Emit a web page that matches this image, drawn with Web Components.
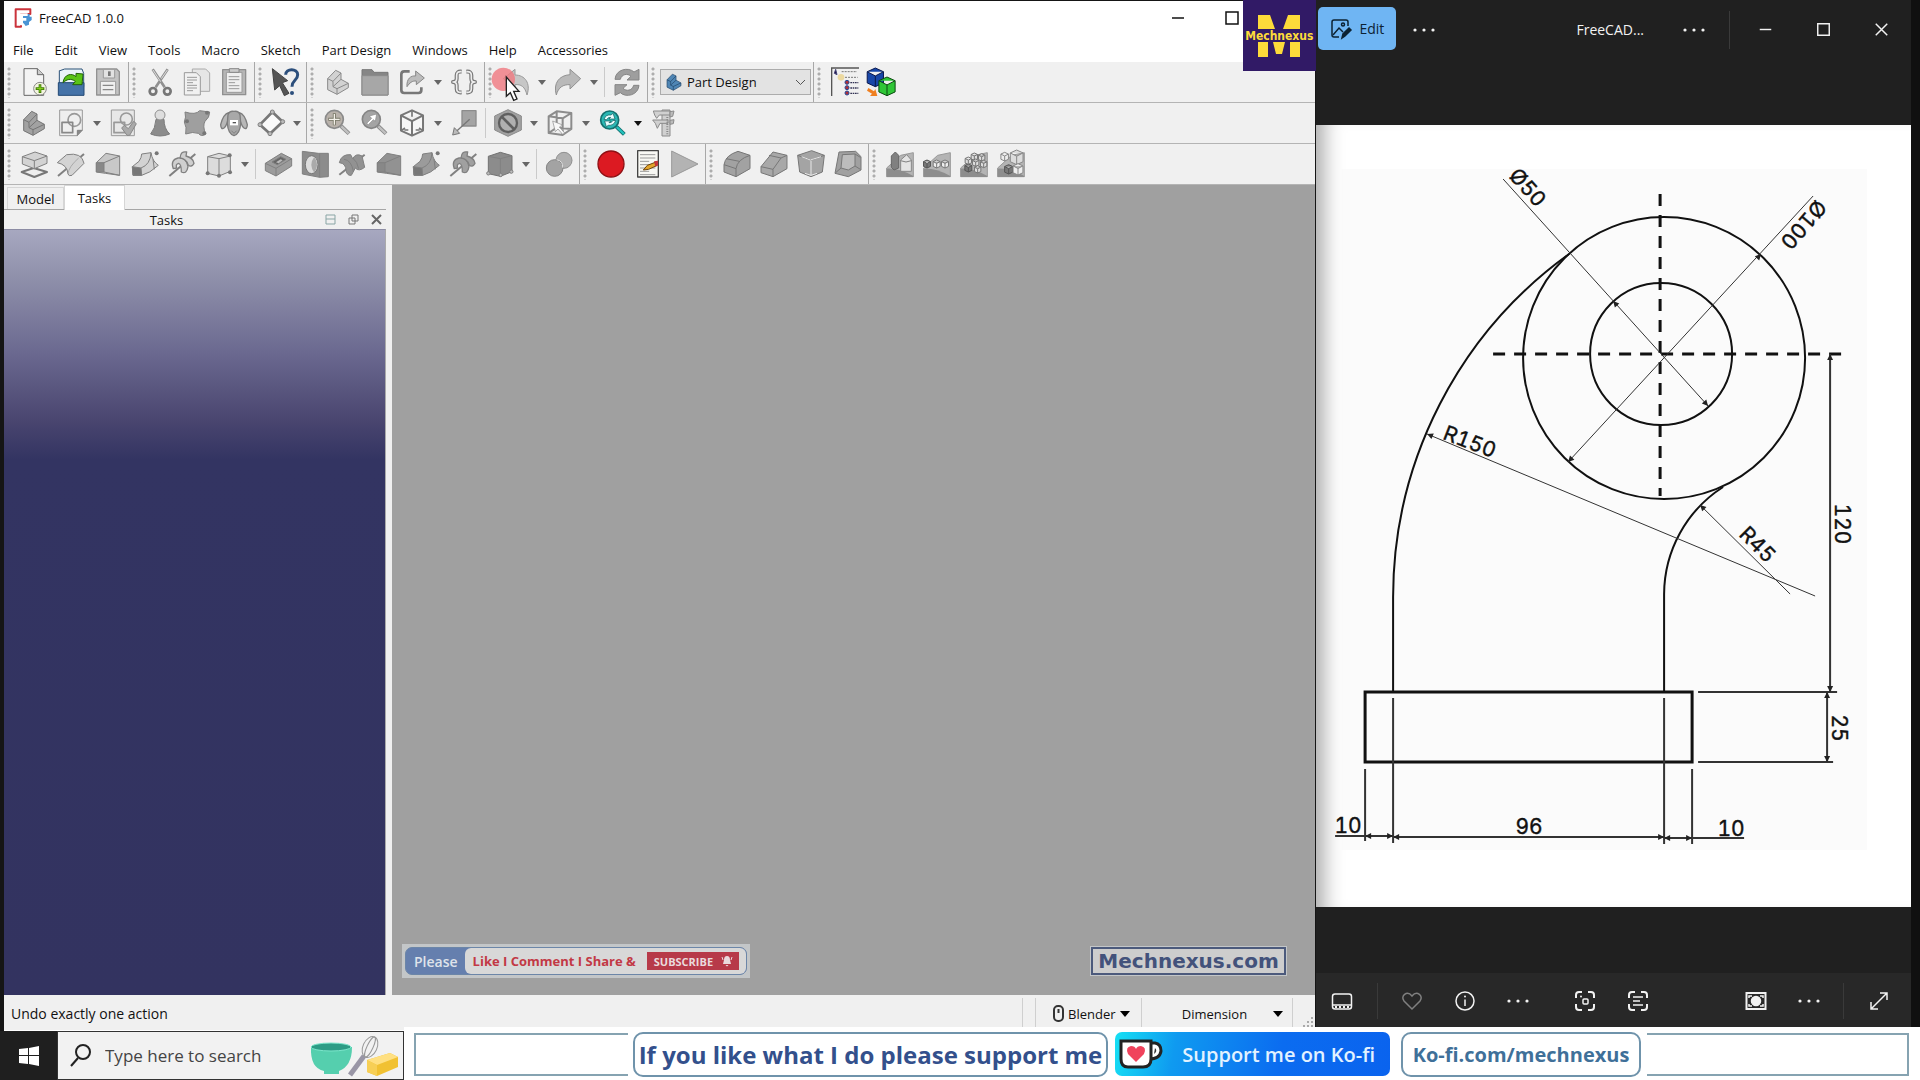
<!DOCTYPE html>
<html lang="en">
<head>
<meta charset="utf-8">
<title>FreeCAD 1.0.0</title>
<style>
html, body { height: 100%; }
body { margin: 0; background: #101010; font-family: "Open Sans", "Noto Sans", sans-serif; font-size: 13px; color: #111; overflow: hidden; }
</style>
</head>
<body>
<desktop-shell></desktop-shell>
<script>
/* Icon table: [centre x, centre y, shapes]; each is drawn in a 90-unit square at 30px. */
const stair = (x, y, f, s) => `<g stroke="${s}" fill="${f}" stroke-width="3"><path d="M${x-31} ${y-10}L${x-7} ${y-35}L${x+9} ${y-27}V${y-8}L${x+31} ${y+4}V${y+17}L${x-3} ${y+37}L${x-31} ${y+23}z"/><path d="M${x-31} ${y-10}L${x-15} ${y-2}V${y+14}L${x-3} ${y+20}V${y+37}M${x-15} ${y-2}L${x+9} ${y-27}M${x-15} ${y+14}L${x+9} ${y-8}M${x-3} ${y+20}L${x+31} ${y+4}" fill="none"/></g>`;
const cube = (x, y, r, f, s, w = 3) => `<path d="M${x} ${y-r}L${x+r*.87} ${y-r*.6}V${y+r*.6}L${x} ${y+r}L${x-r*.87} ${y+r*.6}V${y-r*.6}zM${x-r*.87} ${y-r*.6}L${x} ${y-r*.15}L${x+r*.87} ${y-r*.6}M${x} ${y-r*.15}V${y+r}" fill="${f}" stroke="${s}" stroke-width="${w}"/>`;
const dots = (...p) => p.map(([x, y]) => `<circle cx="${x}" cy="${y}" r="6" fill="#777" stroke="none"/>`).join('');
const loft = (x, f) => `<path d="M${x-35} 488L${x-6} 460L${x+35} 468V526L${x-8} 520L${x-35} 516z" fill="${f}"/><path d="M${x-35} 488H${x-12}V516H${x-35}z" fill="#888"/><path d="M${x-12} 488L${x+35} 468M${x-12} 516L${x+35} 526" fill="none"/>`;
const sweep = (x, f) => `<path d="M${x-38} 500L${x-18} 484Q${x-10} 472 ${x-10} 462L${x+18} 458Q${x+22} 484 ${x+40} 496Q${x+14} 520 ${x-10} 526L${x-36} 526z" fill="${f}"/><path d="M${x-38} 500L${x-12} 504L${x-10} 526L${x-36} 526z" fill="#777"/><path d="M${x-12} 504Q${x+16} 494 ${x+18} 458M${x+24} 478L${x+28} 508" fill="none"/><circle cx="${x+35}" cy="460" r="6" fill="#777" stroke="none"/>`;
const helix = (x, f) => `<path d="M${x-38} 528L${x+40} 462" stroke-width="6" fill="none"/><path d="M${x-26} 506Q${x-36} 480 ${x-12} 474Q${x+14} 472 ${x+18} 500Q${x+14} 524 ${x-2} 516Q${x-2} 492 ${x-10} 490Q${x-20} 492 ${x-16} 504z" fill="${f}" stroke-width="4"/><path d="M${x-6} 474Q${x-4} 452 ${x+14} 456L${x+12} 468Q${x+34} 474 ${x+36} 490Q${x+28} 504 ${x+18} 494Q${x+12} 476 ${x-6} 474z" fill="${f}" stroke-width="4"/>`;
const mag = (x, y, c, s, h) => `<path d="M${x+20} ${y+20}L${x+44} ${y+43}" stroke="${s}" stroke-width="12"/><path d="M${x+21} ${y+21}L${x+43} ${y+42}" stroke="${h}" stroke-width="7"/><circle cx="${x}" cy="${y}" r="27" fill="${c}" stroke="${s}" stroke-width="5"/>`;
const lines = (x, y, w, n, s) => Array.from({length: n}, (_, i) => `<path d="M${x} ${y+i*s}h${i % 3 == 2 ? w*.6 : w}" stroke="#9a9a9a" stroke-width="3"/>`).join('');
const base = x => `<path d="M${x-40} 190L${x+2} 152L${x+40} 144V216H${x-40}z" fill="#b4b4b4" stroke="#999"/><path d="M${x-40} 192Q${x-5} 190 ${x+40} 214V217H${x-40}z" fill="#8d8d8d" stroke="none"/>`;
const BR = 'M1382 217Q1367 215 1367 228V238Q1367 248 1356 248Q1367 248 1367 258V268Q1367 281 1382 279M1396 217Q1411 215 1411 228V238Q1411 248 1422 248Q1411 248 1411 258V268Q1411 281 1396 279';
const ICONS = {
 fcad: [68,54,`<path d="M46 28H90V42H62V80H46z" fill="#fff" stroke="#cb333b" stroke-width="6"/><path d="M62 42H88V50H94V60L86 66V74L76 78L70 70H62z" fill="#4a94d4" stroke="none"/><path d="M58 40H82V48H68V54H78V62H68V76H58z" fill="#fff" stroke="none"/>`],
 new: [102,248,`<path d="M72 208H112L131 226V288H72z" fill="#f4f4f4" stroke="#666" stroke-width="3"/><path d="M112 208V226H131" fill="#ccc" stroke="#666"/><circle cx="120" cy="268" r="19" fill="#f2f4df" stroke="#888"/><path d="M120 255V281M107 268H133" stroke="#3f7a05" stroke-width="8"/><path d="M120 258V278M110 268H130" stroke="#8bdc20"/>`],
 open: [211,248,`<path d="M178 214L192 209H244L249 222V262H176V214z" fill="#e9f4f8" stroke="#2b5177"/><path d="M173 250H250V288H173z" fill="#4573a8" stroke="#244a75"/><path d="M187 250C190 224 214 220 226 232V222L247 224L244 256H216L224 246C210 236 198 240 187 250z" fill="#59c416" stroke="#24610a"/>`],
 save: [324,248,`<path d="M290 209H350L358 217V287H290z" fill="#c3c3c3" stroke="#929292" stroke-width="4"/><path d="M310 210H344V236H310z" fill="#e2e2e2" stroke="#999"/><path d="M324 216H332V230H324z" fill="#777" stroke="none"/><path d="M301 246H347V286H301z" fill="#efefef" stroke="#999"/><path d="M308 258H340M308 271H340" stroke="#888" stroke-width="4"/>`],
 cut: [478,248,`<path d="M456 210L492 264M501 210L465 264" stroke="#909090" stroke-width="8"/><path d="M457 212L480 247M500 212L482 238" stroke="#ddd" stroke-width="3"/><circle cx="457" cy="276" r="10" fill="none" stroke="#777" stroke-width="8"/><circle cx="500" cy="276" r="10" fill="none" stroke="#777" stroke-width="8"/>`],
 copy: [590,248,`<path d="M576 209H616L628 221V276H576z" fill="#e6e6e6" stroke="#aaa"/><path d="M552 220H588L600 232V287H552z" fill="#f1f1f1" stroke="#999"/>${lines(560,234,30,6,8)}`],
 paste: [702,248,`<path d="M668 211H737V286H668z" fill="#b6b6b6" stroke="#909090" stroke-width="4"/><path d="M679 219H726V279H679z" fill="#efefef" stroke="#999"/><path d="M688 208H717V219H688z" fill="#ccc" stroke="#888"/>${lines(686,232,32,5,9)}`],
 help: [857,248,`<path d="M816 208L862 244L846 250L866 282L852 289L838 259L823 272z" fill="#555" stroke="#444"/><path d="M856 226C856 206 892 206 892 226C892 244 875 242 875 262" fill="none" stroke="#2c4f7c" stroke-width="9"/><circle cx="875" cy="281" r="6" fill="#2c4f7c" stroke="none"/>`],
 part: [1011,248,stair(1011,248,'#d2d2d2','#8a8a8a')],
 folder: [1123,248,`<path d="M1084 211H1114L1120 219H1162V287H1084z" fill="#868686" stroke="#777"/><path d="M1084 229H1162V287H1084z" fill="#a7a7a7" stroke="#8a8a8a"/>`],
 link: [1235,248,`<path d="M1228 216H1212Q1203 216 1203 225V272Q1203 281 1212 281H1254Q1263 281 1263 272V264" fill="none" stroke="#777" stroke-width="8"/><path d="M1220 262C1218 238 1232 228 1246 230V215L1272 236L1248 256V245C1236 244 1228 250 1220 262z" fill="#bcbcbc" stroke="#888"/>`],
 braces: [1389,248,`<path d="${BR}" fill="none" stroke="#777" stroke-width="12"/><path d="${BR}" fill="none" stroke="#ededed" stroke-width="5"/>`],
 undo: [135,98,`<path d="M97 88L132 60V77C162 77 180 102 168 137C162 112 150 104 132 106V119z" fill="#c6c6c6" stroke="#999"/>`],
 redo: [289,98,`<path d="M327 88L295 60V76C262 78 244 102 254 137C260 114 274 105 295 106V119z" fill="#b9b9b9" stroke="#929292"/>`],
 refresh: [466,98,`<path d="M430 90C432 60 470 52 487 68L502 60V92H466L478 81C468 71 450 74 446 90zM502 108C500 138 462 146 446 130L430 138V106H466L454 117C464 127 482 124 486 108z" fill="#9e9e9e" stroke="#858585"/>`],
 combo: [612,98,`<g transform="translate(612 98) scale(.84) translate(-612 -98)">${stair(612,98,'#4f86b5','#1f4468')}</g>`],
 tree: [1118,98,`<path d="M1076 56H1160M1078 56V140" stroke="#555" fill="none" stroke-width="4"/><path d="M1090 60L1094 76L1086 72z" fill="#214" stroke="#447"/><circle cx="1106" cy="84" r="10" fill="#ecd9a0" stroke="none"/><path d="M1108 67H1154M1118 84H1156" stroke="#777" stroke-dasharray="6 3"/><g fill="#b03038" stroke="#234a9a"><circle cx="1124" cy="99" r="6"/><circle cx="1124" cy="115" r="6"/><circle cx="1124" cy="131" r="6"/></g><path d="M1134 100H1158M1134 116H1158M1134 132H1158" stroke="#335" stroke-width="4" stroke-dasharray="5 2"/>`],
 cubes: [1232,98,cube(1212,84,28,'#1746a8','#08174e')+cube(1247,111,28,'#2fc636','#0b4a10')+`<path d="M1191 116L1208 126L1212 119L1218 140L1196 140L1202 133L1187 124z" fill="#f08020" stroke="none"/>`],
 body: [99,371,stair(99,371,'#a2a2a2','#757575')],
 sketch: [213,371,`<path d="M179 332H247V393L232 409H179z" fill="#efefef" stroke="#999"/><path d="M232 409V393H247" fill="#888"/><circle cx="223" cy="362" r="19" fill="none" stroke="#999" stroke-width="5"/><path d="M186 369H218V400H186z" fill="none" stroke="#888" stroke-width="5"/>`],
 sketchv: [368,371,`<path d="M333 332H402V409H333z" fill="#e8e8e8" stroke="#999"/><circle cx="378" cy="359" r="18" fill="none" stroke="#999" stroke-width="5"/><path d="M341 369H373V400H341z" fill="none" stroke="#999" stroke-width="5"/><path d="M364 386L372 378L384 388L400 366L408 373L388 408H380z" fill="#aaa" stroke="#888"/>`],
 pawn: [478,371,`<path d="M466 360Q464 388 450 404Q478 416 507 404Q490 388 490 360z" fill="#8c8c8c" stroke="#7a7a7a"/><circle cx="478" cy="347" r="15" fill="#dedede" stroke="#909090"/>`],
 blob: [590,371,`<path d="M554 338Q586 348 598 334L628 338Q628 354 614 366Q606 380 616 404Q604 414 594 402Q578 396 556 404Q560 384 552 368Q558 354 554 338z" fill="#9f9f9f" stroke="#808080"/>${dots([560,366],[620,340],[612,402])}`],
 sheep: [702,371,`<path d="M686 340Q670 344 662 376Q663 392 672 386Q682 378 686 352zM718 340Q734 344 742 376Q741 392 732 386Q722 378 718 352z" fill="#b8b8b8" stroke="#7d7d7d" stroke-width="4"/><path d="M684 346Q688 334 702 336Q716 334 720 346L722 372Q720 404 702 409Q684 404 682 372z" fill="#a8a8a8" stroke="#7d7d7d" stroke-width="4"/><path d="M690 362H714V378H690z" fill="#fff" stroke="none"/><path d="M698 370H708" stroke="#555" stroke-width="4"/><path d="M694 394L702 402L710 394" fill="none"/>`],
 datum: [813,371,`<path d="M817 338L848 367L810 403L780 376z" fill="#fafafa" stroke="#777" stroke-width="8"/>${[[817,338],[848,367],[810,403],[780,376]].map(([x,y])=>`<circle cx="${x}" cy="${y}" r="6" fill="#bbb"/>`).join('')}`],
 fit: [1011,371,mag(1000,360,'#b9b2ab','#8a8a8a','#c0c0c0')+`<path d="M1000 342V378M982 360H1018" stroke="#776" stroke-width="9"/><path d="M1000 344V376M984 360H1016" stroke="#f4f0ea" stroke-width="4"/>`],
 fitsel: [1123,371,mag(1112,360,'#a4a4a4','#858585','#c0c0c0')+`<path d="M1098 372L1113 357L1106 350L1128 344L1124 366L1118 361L1103 376z" fill="#fff" stroke="#888" stroke-width="2"/>`],
 iso: [1235,371,cube(1235,371,38,'#f7f7f7','#777',6)+`<path d="M1235 333V352M1212 392H1224M1246 392H1258M1202 394L1214 386M1268 394L1256 386" stroke="#777" stroke-width="5"/>`],
 view: [1389,371,`<path d="M1383 334H1425V380H1383z" fill="#a4a4a4" stroke="#8c8c8c" stroke-width="4"/><path d="M1406 360L1364 398" stroke="#777" stroke-width="4"/><path d="M1355 407L1360 385L1376 402z" fill="#bbb" stroke="#777"/>`],
 style: [112,220,`<path d="M112 180L152 199V241L112 260L72 241V199z" fill="#a1a1a1" stroke="#8a8a8a"/><circle cx="112" cy="220" r="27" fill="#b0b0b0" stroke="#5f5f5f" stroke-width="7"/><path d="M93 201L131 239" stroke="#5f5f5f" stroke-width="8"/>`],
 selcube: [268,220,`<path d="M234 200L258 185L302 190V238L276 256L234 250zM234 200L276 206L302 190M276 206V256M258 185V234L234 250M258 234L302 238" fill="none" stroke="#8c8c8c" stroke-width="6"/><path d="M246 214L276 226L266 232L282 250L276 254L262 238L254 246z" fill="#f8f8f8" stroke="#888" stroke-width="2"/>`],
 sync: [421,220,mag(414,211,'#2bb8b4','#13706f','#23c2bd')+`<path d="M397 209Q402 194 418 196L424 191L430 208H412L417 203Q409 202 405 210zM432 213Q426 228 410 227L404 231L399 214H417L412 219Q420 221 424 212z" fill="#e9ffff" stroke="#0d5557" stroke-width="2"/>`],
 caliper: [578,220,`<path d="M572 181H596V259H572z" fill="#d0d0d0" stroke="#8a8a8a"/><path d="M546 184H596V196H564L556 206L550 196zM544 211H590V221H566L558 236L552 221z" fill="#d0d0d0" stroke="#8a8a8a"/><path d="M596 186L608 184L604 200L596 202zM596 212L608 210L606 222L596 224z" fill="#bbb" stroke="#8a8a8a"/><path d="M588 202V254" stroke="#888" stroke-width="6" stroke-dasharray="3 4"/>`],
 pad: [99,492,`<path d="M62 516L98 504L138 516L100 531z" fill="#eee" stroke="#777" stroke-width="6"/><path d="M64 470L102 456L138 468V490L100 506L64 492z" fill="#d3d3d3"/><path d="M64 470L100 482L138 468M100 482V506" fill="none"/>`],
 rev: [213,492,`<path d="M174 528L252 462" stroke-width="6" fill="none"/><path d="M172 488L200 464Q246 456 252 490L216 526Q206 530 204 522Q202 494 172 488z" fill="#d3d3d3"/><path d="M204 522Q206 500 236 474" fill="none" stroke="#aaa"/>`],
 loft: [323,492,loft(323,'#c8c8c8')],
 pipe: [434,492,sweep(434,'#d3d3d3')],
 helix: [546,492,helix(546,'#cfcfcf')],
 prim: [658,492,`<path d="M624 470L658 460L692 468V514L658 528L624 520z" fill="#dcdcdc"/><path d="M624 470L658 476L692 468M658 476V528" fill="none"/>${dots([624,520],[658,527],[691,517],[690,466])}`],
 pocket: [834,492,`<path d="M796 490L844 460L875 476V498L828 528L796 512z" fill="#9c9c9c"/><path d="M796 490L828 505L875 476M828 505V528" fill="none"/><path d="M816 486L842 470L858 478L832 494z" fill="#666"/><path d="M828 487L842 478L848 481L836 490z" fill="#bbb" stroke="none"/>`],
 hole: [946,492,`<path d="M908 454L956 460L986 460V530L960 532L908 522z" fill="#8c8c8c"/><path d="M960 462V532" fill="none"/><ellipse cx="936" cy="494" rx="19" ry="27" fill="#ddd" stroke="#777"/><path d="M944 470Q926 494 944 518Q960 494 944 470z" fill="#aaa" stroke="none"/>`],
 groove: [1058,492,`<path d="M1020 524L1096 464" stroke-width="6" fill="none"/><path d="M1020 488Q1026 462 1054 464L1060 476Q1070 458 1088 468L1096 502Q1078 516 1068 504L1056 526Q1044 528 1040 512Q1040 490 1020 488z" fill="#929292"/><path d="M1034 478Q1056 480 1062 514M1060 474Q1074 484 1078 506" fill="none"/>`],
 sloft: [1170,492,loft(1170,'#929292')],
 spipe: [1281,492,sweep(1281,'#9b9b9b')],
 shelix: [1392,492,helix(1392,'#a0a0a0')],
 sprim: [95,343,`<path d="M60 320L96 308L131 318V366L96 380L60 372z" fill="#8c8c8c" stroke="#727272"/><path d="M60 320L96 327L131 318M96 327V380" fill="none"/>${[[60,371],[97,376],[129,366]].map(([x,y])=>`<circle cx="${x}" cy="${y}" r="5" fill="#bbb"/>`).join('')}`],
 bool: [269,343,`<circle cx="284" cy="332" r="24" fill="#b0b0b0" stroke="#909090"/><circle cx="256" cy="355" r="25" fill="#a3a3a3" stroke="#858585"/><path d="M262 330Q282 334 280 354" fill="none" stroke="#e0e0e0"/>`],
 rec: [217,178,`<circle cx="217" cy="178" r="39" fill="#dc1a22" stroke="#8e1014" stroke-width="4"/>`],
 macro: [328,178,`<path d="M297 138H359V217H297z" fill="#f8f8f4" stroke="#444" stroke-width="4"/>${lines(304,150,46,7,10)}<path d="M314 196L326 182L352 172L356 182L330 194z" fill="#e2a52c" stroke="#70440a"/><path d="M346 170L358 168V182L350 186z" fill="#c4373b" stroke="none"/>`],
 play: [440,178,`<path d="M400 139L479 178L400 217z" fill="#b3b3b3" stroke="#999"/>`],
 fillet: [595,178,`<path d="M556 180Q560 152 598 140L634 152V192L592 216L556 202z" fill="#a2a2a2" stroke="#777"/><path d="M556 180L592 192V216M592 192Q596 164 634 152M562 162L602 170" fill="none" stroke="#777"/>`],
 chamfer: [707,178,`<path d="M668 186L704 142L746 152V192L704 216L668 204z" fill="#a8a8a8" stroke="#777"/><path d="M668 186L704 194V216M704 194L728 160L746 152M728 160L692 152" fill="none" stroke="#777"/>`],
 draft: [818,178,`<path d="M778 152L820 138L858 152L852 202L818 216L784 202z" fill="#a4a4a4" stroke="#777"/><path d="M778 152L818 166L858 152" fill="none" stroke="#777"/><path d="M818 168V212M790 156L816 166L848 156M800 206L818 212L836 206" stroke="#e8e8e8" fill="none" stroke-width="3"/>`],
 thick: [929,178,`<path d="M902 142L952 140L968 156V196L930 216L890 206z" fill="#a0a0a0" stroke="#777"/><path d="M912 150L950 148V184L930 196L908 190zM950 148L966 158M950 184L966 194M908 190L892 204" fill="#bcbcbc" stroke="#777"/>`],
 mirror: [1084,178,base(1084)+`<path d="M1058 154L1070 142L1080 152V190L1066 196L1058 188z" fill="#808080" stroke="#666"/><path d="M1086 166L1104 150L1118 166V200H1086z" fill="#e4e4e4" stroke="#888"/><path d="M1086 168Q1102 176 1118 168" fill="none"/>`],
 linear: [1196,178,base(1196)+cube(1166,178,12,'#777','#555')+cube(1195,178,12,'#eee','#777')+cube(1220,178,12,'#eee','#777')],
 polar: [1307,178,base(1307)+cube(1290,190,12,'#777','#555')+[[1290,168],[1308,156],[1330,158],[1336,178],[1318,194],[1312,174]].map(([x,y])=>cube(x,y,11,'#ddd','#777')).join('')],
 multi: [1419,178,base(1419)+cube(1436,158,22,'#dcdcdc','#888')+cube(1400,156,13,'#eee','#888')+cube(1412,194,14,'#777','#555')+cube(1440,194,17,'#eee','#888')],
};

/* Photo viewer icons, 24-unit square. */
const VIEW = {
 edit: `<path d="M10 20H5Q3 20 3 18V5Q3 3 5 3H17Q19 3 19 5V9" /><path d="M4 18L10 11L14 15"/><circle cx="14" cy="7.500" r="1.500"/><path d="M13 21L14 17L20 11L22 13L16 19z" fill="currentColor"/>`,
 more: `<g fill="currentColor" stroke="none"><circle cx="3" cy="12" r="1.600"/><circle cx="12" cy="12" r="1.600"/><circle cx="21" cy="12" r="1.600"/></g>`,
 min: `<path d="M6 12H18"/>`, max: `<path d="M6 6H18V18H6z"/>`, close: `<path d="M6 6L18 18M18 6L6 18"/>`,
 film: `<rect x="2.500" y="5" width="19" height="15" rx="2.500"/><path d="M3 16H21"/><path d="M5 18H20" stroke-dasharray="2 2" stroke-width="2"/>`,
 heart: `<path d="M12 20L4 12C0 7 7 1 12 7C17 1 24 7 20 12z"/>`,
 info: `<circle cx="12" cy="12" r="9"/><path d="M12 10.500V17"/><circle cx="12" cy="7.500" r="1" fill="currentColor" stroke="none"/>`,
 scan: `<path d="M9 3H6Q3 3 3 6V9M15 3H18Q21 3 21 6V9M9 21H6Q3 21 3 18V15M15 21H18Q21 21 21 18V15" stroke-width="2"/><rect x="10" y="10" width="5" height="5" rx="1"/><circle cx="8" cy="7.500" r="1" fill="currentColor" stroke="none"/>`,
 text: `<path d="M9 3H6Q3 3 3 6V9M15 3H18Q21 3 21 6V9M9 21H6Q3 21 3 18V15M15 21H18Q21 21 21 18V15" stroke-width="2"/><path d="M7 8H17M7 12H14M7 16H17"/>`,
 bg: `<rect x="2.500" y="4" width="19" height="16" stroke-width="2"/><circle cx="12" cy="12" r="4.500" fill="currentColor"/><path d="M5 9V7H8M16 7H19V9M5 15V17H8M16 17H19V15"/>`,
 expand: `<path d="M4 20L20 4M13 4H20V11M4 13V20H11"/>`,
};

class Base extends HTMLElement {
  constructor() { super(); this.attachShadow({mode: 'open'}); }
  connectedCallback() { this.shadowRoot.innerHTML = `<style>:host,*{box-sizing:border-box}button,select,input{font:inherit;color:inherit;border:0;background:none;padding:0;margin:0}${this.css()}</style>${this.html()}`; }
}
const def = (name, css, html) => customElements.define(name, class extends Base {
  css() { return typeof css == 'function' ? css(this) : css; }
  html() { return typeof html == 'function' ? html(this) : html; }
});

def('fc-icon', `:host{display:block;width:30px;height:30px}svg{display:block;width:100%;height:100%;overflow:visible}`, e => {
  const [x, y, s] = ICONS[e.getAttribute('name')];
  return `<svg viewBox="${x-45} ${y-45} 90 90" aria-hidden="true" fill="none" stroke="#808080" stroke-width="3" stroke-linejoin="round">${s}</svg>`;
});
def('view-icon', `:host{display:block;width:24px;height:24px}svg{display:block;width:100%;height:100%}`, e =>
  `<svg viewBox="0 0 24 24" aria-hidden="true" fill="none" stroke="currentColor" stroke-width="1.500">${VIEW[e.getAttribute('name')]}</svg>`);

def('tool-button', `:host{display:flex;height:100%}button{display:grid;place-items:center;width:37px;height:100%}.d{width:15px}.d i{width:0;border:4px solid transparent;border-top:5px solid var(--arrow,#666);border-bottom:0}`, e =>
  `<button aria-label="${e.getAttribute('icon')}"><fc-icon name="${e.getAttribute('icon')}"></fc-icon></button>${e.hasAttribute('drop') ? '<button class="d" aria-label="more"><i></i></button>' : ''}`);

def('tool-bar', `:host{display:flex;align-items:center;height:40px;padding-right:2px;border-right:1px solid #a8a8a8}:host([last]){border-right:0}
.g{width:12px;height:32px;background:radial-gradient(circle at 5px 3px,#adadad 1px,transparent 2px) 0 0/12px 5px}:host(:first-child) .g{width:11px}`,
  `<span class="g"></span><slot></slot>`);
def('tool-sep', `:host{display:block;width:1px;height:30px;margin:0 3px;background:#cacaca}`, '');

def('work-bench', `:host{display:grid;width:151px;height:26px;align-items:center}select,fc-icon,svg{grid-area:1/1}
select{appearance:none;width:100%;height:100%;border:1px solid #acacac;background:#e3e3e3;padding-left:26px}fc-icon{z-index:1;width:24px;height:24px;margin-left:2px;pointer-events:none}svg{justify-self:end;margin-right:5px;pointer-events:none}`,
  `<select aria-label="Workbench"><option>Part Design</option></select><fc-icon name="combo"></fc-icon><svg width="11" height="7" viewBox="0 0 11 7" fill="none" stroke="#555"><path d="M1 1L5.500 5.500L10 1"/></svg>`);

def('tool-rows', `:host{display:block;background:#f0f0f0}div{display:flex;height:41px;border-bottom:1px solid #b4b4b4}.k{--arrow:#111}`, () => {
  const b = s => s.split(' ').map(n => n == '|' ? '<tool-sep></tool-sep>' : n.endsWith('+') ? `<tool-button icon="${n.slice(0,-1)}" drop${n == 'sync+' ? ' class="k"' : ''}></tool-button>` : `<tool-button icon="${n}"></tool-button>`).join('');
  const row = (...t) => `<div role="toolbar">${t.map((x, i) => `<tool-bar${i == t.length-1 ? ' last' : ''}>${x[0] == '<' ? x : b(x)}</tool-bar>`).join('')}</div>`;
  return row('new open save','cut copy paste','help','part folder link+ braces','undo+ redo+ | refresh','<work-bench></work-bench>','tree cubes')
    + row('body sketch+ sketchv pawn blob sheep datum+','fit fitsel iso+ view | style+ selcube+ sync+ caliper')
    + row('pad rev loft pipe helix prim+ | pocket hole groove sloft spipe shelix sprim+ | bool','rec macro play','fillet chamfer draft thick','mirror linear polar multi');
});

def('title-bar', `:host{display:flex;align-items:center;height:34px;padding-left:4px;background:#fff}span{margin-left:1px;flex:1}button{width:54px;height:34px;display:grid;place-items:center}nav{display:flex;margin-right:56px}`,
  `<fc-icon name="fcad"></fc-icon><span>FreeCAD 1.0.0</span><nav><button aria-label="Minimize"><view-icon name="min"></view-icon></button><button aria-label="Maximize"><view-icon name="max"></view-icon></button></nav>`);
def('menu-bar', `:host{display:flex;gap:21px;height:27px;align-items:center;padding:2px 0 0 9px;background:#fff}`,
  ['File','Edit','View','Tools','Macro','Sketch','Part Design','Windows','Help','Accessories'].map(m => `<button>${m}</button>`).join(''));

def('dock-panel', `:host{display:flex;flex-direction:column;width:388px;padding-right:6px;background:#f0f0f0}
.tabs{display:flex;align-items:flex-end;height:25px;padding-left:3px;border-bottom:1px solid #a6a6a6}.tabs button{height:22px;width:57px;border:1px solid #d6d6d6;border-bottom:0}.tabs .on{height:25px;width:61px;margin-bottom:-1px;background:#fff}
header{display:flex;align-items:center;height:19px;margin-right:-2px}h2{flex:1;margin:0;padding-left:10px;font:inherit;text-align:center}header button{width:23px;height:19px;color:#666;display:grid;place-items:center}svg{display:block}
.body{flex:1;border-top:1px solid #8c8ca4;border-right:1px solid #aaa;background:linear-gradient(#a7a8c0,#9091ab 6%,#6b6990 16%,#49456f 25%,#333462 30%,#333360)}`,
  `<div class="tabs" role="tablist"><button role="tab">Model</button><button role="tab" class="on">Tasks</button></div>
  <header><h2>Tasks</h2><button aria-label="Collapse"><svg width="11" height="11" fill="none" stroke="#89a5a5"><path d="M1 1H10V10H1zM1 5H10"/></svg></button><button aria-label="Float"><svg width="11" height="11" fill="none" stroke="#777"><path d="M4 1H10V7H4zM1 4H7V10H1z"/></svg></button><button aria-label="Close"><svg width="11" height="11" fill="none" stroke="#666" stroke-width="2"><path d="M1 1L10 10M10 1L1 10"/></svg></button></header><div class="body"></div>`);

def('like-banner', `:host{display:flex;align-items:center;height:34px;padding:3px;background:#c3c6c8;font-weight:600}
.p{flex:1;display:flex;align-items:center;height:28px;border:1px solid #6c86a8;border-radius:7px;background:#657fae;color:#dfe3ea;font-size:14px;padding-left:8px}.w{display:flex;align-items:center;height:26px;margin-left:7px;padding:0 7px 0 8px;border-radius:6px;background:#d8d8d8;color:#c23845;font-weight:700;font-size:13px}
button{display:flex;align-items:center;gap:8px;height:18px;margin-left:11px;padding:0 6px 0 7px;background:#b73a49;color:#eadadd;font-size:11px;font-weight:700}`,
  `<div class="p">Please<div class="w">Like I Comment I Share &amp;<button>SUBSCRIBE<svg width="12" height="12" viewBox="0 0 12 12" fill="#eadadd"><path d="M6 1Q9 1 9 5L10 9H2L3 5Q3 1 6 1zM4.500 10H7.500L6 11.500z"/><path d="M1 2L2 5M11 2L10 5" stroke="#eadadd"/></svg></button></div></div>`);
def('site-badge', `:host{display:block;margin-bottom:2px;padding:1px;background:#c3c6c8}div{border:2px solid #4c5a7c;height:28px;padding:0 5px;background:#cdcdcd;color:#43527b;font:bold 20px/24px "DejaVu Sans",sans-serif}`, `<div>Mechnexus.com</div>`);
def('model-canvas', `:host{display:flex;flex:1;align-items:flex-end;justify-content:space-between;background:#a0a0a0;padding:0 28px 17px 10px}`, `<like-banner></like-banner><site-badge></site-badge>`);

def('status-bar', `:host{display:flex;height:36px;padding:3px 0 1px;background:#f0f0f0;border-bottom:1px solid #fff}span{flex:1;padding:6px 7px;line-height:19px;font-size:14px}
button{display:flex;align-items:center;justify-content:center;gap:4px;border-left:1px solid #cfcfcf}.s{width:13px;border-left:1px solid #cfcfcf}.b{width:106px;padding-left:6px}.d{width:151px;padding:0 9px 0 40px;justify-content:space-between}.e{width:23px;border-left:1px solid #cfcfcf;display:flex;align-items:flex-end;justify-content:flex-end}
i{border:5px solid transparent;border-top:6px solid #000;border-bottom:0}svg{display:block}`,
  `<span>Undo exactly one action</span><div class="s"></div><button class="b"><svg width="11" height="18" fill="none" stroke="#333" stroke-width="2"><rect x="1" y="1" width="9" height="15" rx="4"/><path d="M5.500 4V8"/></svg>Blender<i></i></button><button class="d">Dimension<i></i></button><div class="e"><svg width="12" height="12" fill="#aaa"><path d="M8 0h2v2H8zM4 4h2v2H4zM8 4h2v2H8zM0 8h2v2H0zM4 8h2v2H4zM8 8h2v2H8z"/></svg></div>`);

def('cursor-mark', `:host{display:block;width:30px;height:40px;pointer-events:none}`, `<svg width="30" height="40" viewBox="0 0 90 120"><circle cx="37" cy="37" r="35" fill="#f07880" opacity=".8"/><path d="M46 30V88L58 77L68 100L78 96L68 73H84z" fill="#fff" stroke="#222" stroke-width="4"/></svg>`);
def('channel-logo', `:host{display:grid;place-items:center;width:73px;height:71px;background:#311a66}svg,b{grid-area:1/1}b{z-index:1;color:#fddb3a;font:bold 12px "DejaVu Sans Condensed","DejaVu Sans",sans-serif}`,
  `<svg width="42" height="42" viewBox="0 0 42 42"><path d="M0 0H12L17 14H0zM42 0H30L25 14H42zM0 27H10V42H0zM15 27H27L24 39H18zM32 27H42V42H32z" fill="#fddb3a"/></svg><b>Mechnexus</b>`);

def('cad-window', `:host{display:flex;flex-direction:column;position:relative;min-width:0;padding:1px 1px 0 4px;background:#151515}main{display:flex;flex:1;min-height:0}cursor-mark{position:absolute;left:491px;top:67px}channel-logo{position:absolute;right:0;top:0}`,
  `<title-bar></title-bar><menu-bar></menu-bar><tool-rows></tool-rows><main><dock-panel></dock-panel><model-canvas></model-canvas></main><status-bar></status-bar><cursor-mark></cursor-mark><channel-logo></channel-logo>`);

def('part-drawing', `:host{display:block;background:#fff;box-shadow:inset 24px 0 20px -16px #aaa}svg{display:block;width:100%;height:100%}text{font:21px Inter,"Liberation Sans",sans-serif;font-variant-numeric:tabular-nums;fill:#111;stroke:#111;stroke-width:.4;text-anchor:middle}`, () => {
  const t = (s, x, y, r = 0) => `<text transform="translate(${x} ${y}) rotate(${r})" y="8">${s}</text>`;
  const a = (x, y, r) => `<path transform="translate(${x} ${y}) rotate(${r})" d="M0 0L-6 3V-3z" fill="#222" stroke="none"/>`;
  return `<svg viewBox="1316 125 595 782" fill="none" stroke="#111"><path d="M1341 169H1867V850H1341z" fill="#f8f8f8" opacity=".6" stroke="none"/>
  <g stroke-width="2"><circle cx="1664" cy="358" r="141"/><circle cx="1661" cy="354" r="71"/><path d="M1569 254A423 423 0 0 0 1393 597V692M1723 487A128 128 0 0 0 1664 594V692"/></g>
  <path d="M1365 692H1692V762H1365z" stroke-width="3"/>
  <path d="M1493 354H1845M1660 194V496" stroke-width="3" stroke-dasharray="12 9"/>
  <path d="M1503 179L1708 406M1813 196L1568 462M1427 434L1815 596M1700 505L1790 594" stroke="#333"/>
  <path d="M1830 354V692M1698 692H1837M1698 762H1833M1827 692V762M1365 769V841M1393 698V843M1664 698V844M1692 769V844M1335 836H1393M1393 837H1664M1664 838H1744" stroke="#333" stroke-width="2"/>
  ${a(1568,462,133)}${a(1761,254,-47)}${a(1708,406,48)}${a(1613,301,228)}${a(1427,434,203)}${a(1700,505,225)}${a(1830,692,90)}${a(1830,354,-90)}${a(1827,762,90)}${a(1827,692,-90)}${a(1393,836,0)}${a(1365,836,180)}${a(1393,837,180)}${a(1664,837,0)}${a(1664,838,180)}${a(1692,838,0)}
  ${t('Ø50',1528,187,48)}${t('Ø100',1804,225,131)}${t('R150',1470,441,21)}${t('R45',1758,544,45)}${t('120',1843,524,90)}${t('25',1840,728,90)}${t('10',1348,825)}${t('96',1529,826)}${t('10',1731,828)}</svg>`;
});

def('photo-viewer', `:host{display:flex;flex-direction:column;min-width:0;background:#202020;color:#f2f2f2;font-size:14px}header{display:flex;align-items:flex-start;height:125px;padding:7px 1px 0 2px}
button{display:grid;place-items:center;height:46px}.ed{display:flex;align-items:center;justify-content:center;gap:6px;width:78px;height:43px;border-radius:5px;background:#6fb5f3;color:#0c2233}.m{width:57px}header span{margin:0 15px 0 auto;line-height:46px}header .m2{width:70px}.w{width:58px;height:44px}.w view-icon{width:23px;height:23px}
hr{width:1px;border:0;margin:4px 6px 0 0;height:38px;background:#3a3a3a}part-drawing{flex:1;min-height:0}
.gap{height:66px}footer{display:flex;align-items:center;height:55px;padding:1px 6px 0 0;background:#282828}footer button{width:53px}footer hr{margin:0 8px;height:36px}.s{margin-left:14px}.r{margin-left:auto}.h{color:#808080}`, () => {
  const b = (n, c = '') => `<button class="${c}" aria-label="${n}"><view-icon name="${n}"></view-icon></button>`;
  return `<header><button class="ed"><view-icon name="edit"></view-icon>Edit</button>${b('more','m')}<span>FreeCAD...</span>${b('more','m2')}<hr>${b('min','w')}${b('max','w')}${b('close','w')}</header><part-drawing></part-drawing><div class="gap"></div><footer>${b('film')}<hr>${b('heart','h')}${b('info')}${b('more')}${b('scan','s')}${b('text')}${b('bg','r')}${b('more')}<hr>${b('expand')}</footer>`;
});

def('task-search', `:host{display:flex;align-items:center;width:347px;height:49px;border:1px solid #333;background:#f2f2f2;padding:0 4px 0 12px}input{flex:1;min-width:0;height:40px;margin-left:13px;font-size:17px;outline:0}input::placeholder{color:#444;opacity:1}svg{flex:none}`,
  `<svg width="22" height="26" viewBox="0 0 22 26" fill="none" stroke="#222" stroke-width="2"><circle cx="13" cy="9" r="7"/><path d="M8 15L1 23"/></svg><input aria-label="Search" placeholder="Type here to search"><svg width="90" height="42" viewBox="0 0 90 42"><path d="M2 12Q1 33 15 36V39H30V36Q43 31 43 12z" fill="#55cfae"/><ellipse cx="22" cy="12" rx="20" ry="4" fill="#2c9c85" stroke="#7ce6cb"/><path d="M41 40L55 21" stroke="#9996a6" stroke-width="5"/><g fill="none" stroke="#999"><ellipse cx="61" cy="12" rx="7" ry="11" transform="rotate(25 61 12)"/><ellipse cx="61" cy="12" rx="3" ry="11" transform="rotate(25 61 12)"/></g><path d="M58 25L81 18L89 22V32L68 41L58 37z" fill="#f1c132"/><path d="M58 25L81 18L89 22L68 30z" fill="#ffe082"/><path d="M58 25L68 30V41L58 37z" fill="#f7cf55"/></svg>`);

def('support-strip', `:host{display:flex;flex:1;align-items:center;height:53px;margin-top:-4px;padding:1px 11px 0 10px;background:#fff;position:relative;white-space:nowrap}
.l,.r{height:43px;border:2px solid #86a3b1}.l{width:214px;border-right:0}.r{flex:1;border-left:0}.box{display:grid;place-items:center;height:45px;border:2px solid #6f93ab;border-radius:10px;font-weight:700}
.a{width:475px;margin:0 7px 0 5px;color:#33508c;font-size:24px}.k{display:flex;align-items:center;justify-content:space-between;width:275px;height:44px;padding:0 15px 0 4px;border-radius:7px;background:linear-gradient(100deg,#16e0f4,#0f9af0 22%,#0b6cf0 60%,#0a63ee);color:#e2f2ff;font-size:20px;font-weight:600;text-decoration:none}
.c{width:240px;margin:0 6px 0 11px;color:#3f7099;font-size:20px;text-decoration:none}`,
  `<div class="l"></div><div class="box a">If you like what I do please support me</div><a class="k" href="#kofi"><svg width="44" height="30" viewBox="0 0 44 30"><path d="M30 4H36Q42 5 42 12Q41 20 30 20z" fill="#fff" stroke="#222" stroke-width="3"/><path d="M2 2H32V20Q32 28 24 28H9Q2 28 2 20z" fill="#fff" stroke="#222" stroke-width="3"/><path d="M17 23L9 15Q6 8 12 7Q16 7 17 10Q18 7 22 7Q28 8 25 15z" fill="#f0435c"/><path d="M36 9Q39 12 35 15z" fill="#333"/></svg>Support me on Ko-fi</a><a class="box c" href="#site">Ko-fi.com/mechnexus</a><div class="r"></div>`);
def('task-bar', `:host{display:flex;height:49px;background:#fff}.st{display:grid;place-items:center;width:57px;height:49px;background:#1f1f1f}`,
  `<button class="st" aria-label="Start"><svg width="20" height="20" viewBox="0 0 20 20" fill="#fff"><path d="M0 3L9 2V9H0zM10 2L20 0V9H10zM0 10H9V18L0 17zM10 10H20V20L10 18z"/></svg></button><task-search></task-search><support-strip></support-strip>`);

def('desktop-shell', `:host{display:grid;grid-template:minmax(0,1fr) 49px/minmax(0,1fr) 31% 9px;height:100vh}photo-viewer{margin-bottom:3px}task-bar{grid-column:1/-1}`,
  `<cad-window></cad-window><photo-viewer></photo-viewer><div></div><task-bar></task-bar>`);
</script>
</body>
</html>
